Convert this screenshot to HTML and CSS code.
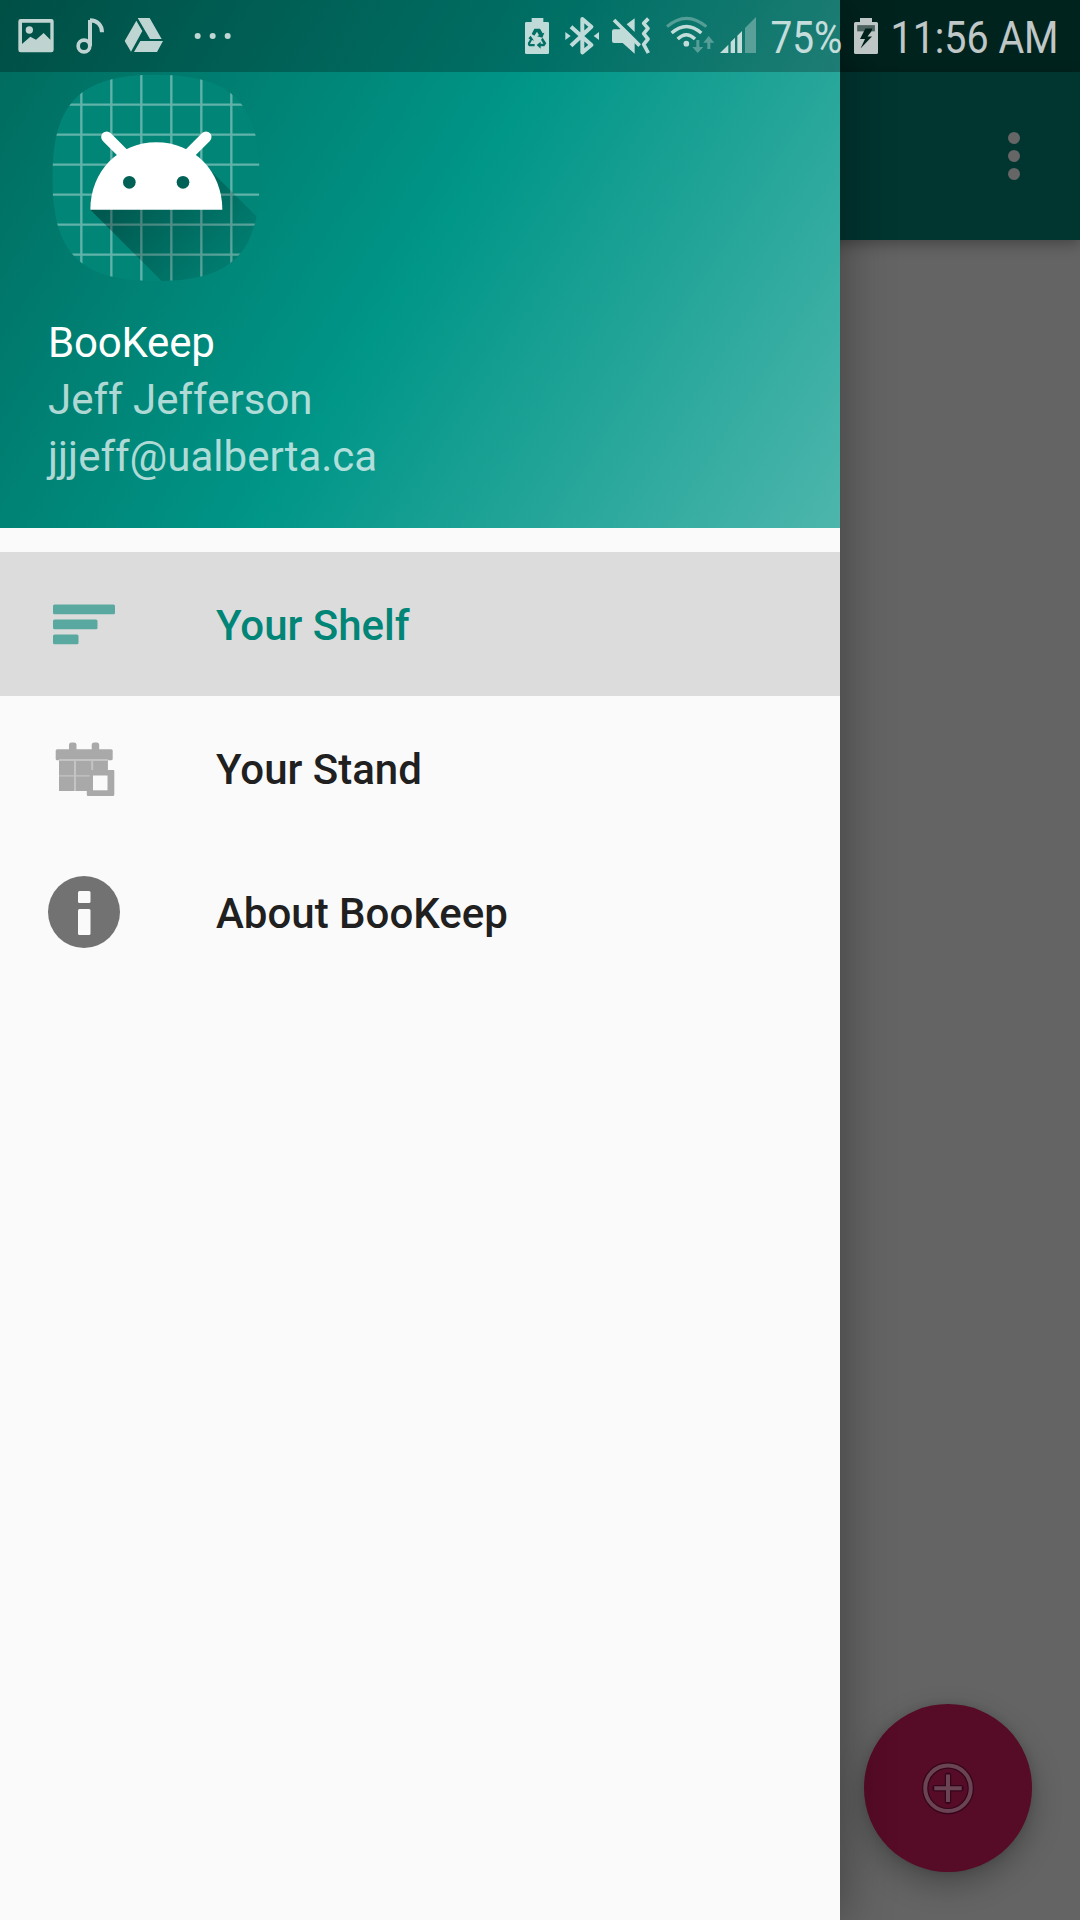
FILE: index.html
```html
<!DOCTYPE html>
<html lang="en">
<head>
<meta charset="utf-8">
<title>BooKeep</title>
<link rel="stylesheet" href="styles.css">
</head>
<body>
<div class="screen">
  <main class="page">
    <div class="page-status"></div>
    <header class="app-bar">
      <svg class="overflow" width="12" height="48" viewBox="0 0 12 48"><circle cx="6" cy="6" r="6"/><circle cx="6" cy="24" r="6"/><circle cx="6" cy="42" r="6"/></svg>
    </header>
    <button class="fab" aria-label="Add">
      <svg width="54" height="54" viewBox="0 0 54 54" fill="none" stroke-linecap="round">
        <g stroke="#34051a" stroke-width="6.4"><circle cx="27" cy="27.300" r="22.8"/><path d="M14.5 27.300h25M27 14.8v25"/></g>
        <g stroke="#6b4453" stroke-width="4" stroke-linecap="butt"><circle cx="27" cy="27.300" r="22.8"/><path d="M13.3 27.300h27.4M27 13.600v27.4"/></g>
      </svg>
    </button>
  </main>

  <aside class="drawer">
    <header class="drawer-header">
      <svg class="logo" width="208" height="208" viewBox="65 43 624 624">
        <defs>
          <clipPath id="mask"><path d="M377 45C604 45 688 128 688 355S604 664 377 664 66 582 66 355 150 45 377 45Z"/></clipPath>
          <linearGradient id="cast" gradientUnits="userSpaceOnUse" x1="270" y1="350" x2="550" y2="630"><stop offset="0" stop-opacity=".36"/><stop offset="1" stop-opacity=".08"/></linearGradient>
        </defs>
        <g clip-path="url(#mask)">
          <path fill="#008577" d="M60 40h640v640H60z"/>
          <path stroke="#fff" stroke-opacity=".38" stroke-width="7" d="M153 40v630M243 40v630M333 40v630M423 40v630M513 40v630M603 40v630M60 135h640M60 225h640M60 315h640M60 405h640M60 495h640M60 585h640"/>
          <path fill="url(#cast)" d="M180 450 430 700H700V492L536 328 300 300Z"/>
        </g>
        <path fill="#fff" d="M180 450C180 335 265 248 378 248S576 335 576 450Z"/>
        <path stroke="#fff" stroke-width="33" stroke-linecap="round" d="m229 232 62 62M527 232l-62 62"/>
        <circle cx="297" cy="368" r="19" fill="#006156"/><circle cx="458" cy="368" r="19" fill="#006156"/>
      </svg>
      <div class="account">
        <div class="account-name">BooKeep</div>
        <div>Jeff Jefferson</div>
        <div>jjjeff@ualberta.ca</div>
      </div>
    </header>
    <nav class="menu">
      <a class="item selected">
        <svg width="72" height="72" viewBox="0 0 72 72" fill="#5aa9a0"><rect x="5" y="16.500" width="62" height="9.700" rx="1.5"/><rect x="5" y="31.500" width="44.5" height="9.700" rx="1.5"/><rect x="5" y="46.500" width="25.5" height="9.700" rx="1.5"/></svg>
        <span>Your Shelf</span>
      </a>
      <a class="item">
        <svg width="72" height="72" viewBox="0 0 72 72" fill="#a9a9a9">
          <rect x="21" y="10.500" width="7.5" height="12" rx="2.5"/><rect x="43.7" y="10.500" width="7.5" height="12" rx="2.5"/>
          <rect x="7.7" y="17.300" width="57" height="11" rx="1.5"/>
          <path fill="#c4c4c4" d="M11 27h49v16H44v16H11z"/>
          <path d="M11 29h15v14.300H11zM28 29h15.2v14.300H28zM45.2 29h14.5v14.300H45.2zM11 44.500h15V59H11zM28 44.500h15.2V59H28z"/>
          <path d="M38.8 58h3V38h23.5q1 0 1 1V62.500q0 1.500-1.500 1.500H40q-1.200 0-1.200-1.500z"/>
          <path fill="#fafafa" d="M45 43.500h14.500v14.800H45z"/>
        </svg>
        <span>Your Stand</span>
      </a>
      <a class="item">
        <svg width="72" height="72" viewBox="0 0 72 72"><circle cx="36" cy="36" r="36" fill="#727272"/><rect x="30" y="15" width="12.5" height="12" rx="1.500" fill="#fafafa"/><rect x="30" y="33" width="12.5" height="26" rx="1.500" fill="#fafafa"/></svg>
        <span>About BooKeep</span>
      </a>
    </nav>
  </aside>

  <div class="status-bar">
    <svg width="240" height="72" viewBox="0 0 720 216" fill="#fff">
      <path fill-rule="evenodd" d="M62 57h92q7 0 7 7v86q0 7-7 7H62q-7 0-7-7V64q0-7 7-7zM66 68v64l25-22 17 9 23-20 20 20V68z"/><circle cx="88" cy="90" r="11"/>
      <g fill="none" stroke="#fff"><circle cx="252" cy="138" r="17.500" stroke-width="11"/><path stroke-width="12" d="M270 138V60M270 61C292 61 306 76 306 97"/></g>
      <path d="M413 54h36l36 63h-35zM409 62l18 31-34 62-19-32zM421 123h68l-18 33h-69z"/>
      <circle cx="593" cy="108" r="9"/><circle cx="638" cy="108" r="9"/><circle cx="683" cy="108" r="9"/>
    </svg>
    <div class="status-right">
      <svg width="250" height="72" viewBox="0 0 750 216" fill="#fff">
        <path fill-rule="evenodd" d="M65 54h35v12h13q4 0 4 4v88q0 4-4 4H49q-4 0-4-4V70q0-4 4-4h16zM73 86h17l8 14 5-2-6 15-16-4 6-3-6-11-8 12-8-5zM62 107l10 15-6-2-6 12h14v7H57q-7-7 0-15l3-6-5-3zM98 113l11 17-6 9H92v7l-12-11 12-10v6h8l-7-12z"/>
        <path fill="none" stroke="#fff" stroke-width="12" stroke-linejoin="round" d="m183 80 61 55-27 22V57l27 23-61 57"/>
        <path d="M166 96l16 12-16 12zM267 96l-16 12 16 12z"/>
        <path d="M306 94q0-6 6-6h18l8-8 36 36v45l-36-32h-26q-6 0-6-6zM374 55v41l-24-23z"/>
        <path fill="none" stroke="#fff" stroke-width="11" d="m312 60 77 77"/>
        <path fill="none" stroke="#fff" stroke-width="11" stroke-linejoin="round" d="m415 56-14 14 13 15-13 16 13 16-13 16 14 26"/>
        <g fill="none" stroke="#fff" stroke-width="10"><path stroke-opacity=".4" stroke-width="9" d="M471 80Q529 30 589 80"/><path d="M485 99Q529 60 574 99M503 117Q529 92 555 117"/></g>
        <circle cx="529" cy="131" r="8.500"/>
        <path fill-opacity=".4" d="M559 120h9v21h12l-17 18-16-18h12zM592 147h9v-19h12l-17-20-16 20h12z"/>
        <path d="M630 159l25-25v25zM662 159v-33l13-13v46zM682 159v-52l14-14v66z"/><path fill-opacity=".4" d="M705 159V84l33-33v108z"/>
      </svg>
      <svg width="320" height="72" viewBox="0 0 320 72" fill="#fff">
        <text class="clock" x="10.500" y="53" textLength="72" lengthAdjust="spacingAndGlyphs">75%</text>
        <path fill-rule="evenodd" d="M100 18h12v4h4.500q1.500 0 1.500 1.500v29q0 1.500-1.500 1.500h-21q-1.500 0-1.500-1.500v-29q0-1.500 1.500-1.500h4.500zM97.300 25.300v6h6.700L100 39h5l-4.500 9.500L112 36.500h-4.500l4-5.200h3.300v-6z"/>
        <path fill-opacity=".4" d="M97.300 25.300h17.500v6h-3.300l.8-2.800h-7l-1.300 2.800h-6.700z"/>
        <text class="clock" x="130.500" y="53" textLength="168" lengthAdjust="spacingAndGlyphs">11:56 AM</text>
      </svg>
    </div>
  </div>
</div>
</body>
</html>
```
FILE: styles.css
```css
* { box-sizing: border-box; }
body { margin: 0; font-family: Roboto, "Liberation Sans", sans-serif; }
.screen { position: relative; width: 1080px; height: 1920px; overflow: hidden; }

.page { height: 100%; background: #646464; }
.page-status { height: 72px; background: #00231e; }
.app-bar {
  display: flex; align-items: center; justify-content: flex-end;
  height: 168px; padding: 0 60px 0 0;
  background: #003530; box-shadow: 0 4px 14px rgba(0, 0, 0, .32);
}
.overflow { fill: #666; }
.fab {
  position: absolute; right: 48px; bottom: 48px;
  display: flex; align-items: center; justify-content: center;
  width: 168px; height: 168px; padding: 0;
  border: 0; border-radius: 50%; background: #560b26;
  box-shadow: 0 12px 30px rgba(0, 0, 0, .28), 0 0 8px rgba(0, 0, 0, .12);
}

.drawer {
  position: absolute; top: 0; left: 0; width: 840px; height: 100%;
  background: #fafafa; box-shadow: 0 0 48px rgba(0, 0, 0, .38);
}
.drawer-header {
  display: flex; flex-direction: column; align-items: flex-start;
  height: 528px; padding: 74px 48px 0;
  background: linear-gradient(122.15deg, #00695c, #009688 50%, #4db6ac);
}
.logo { margin-left: 4px; }
.account {
  margin-top: 32px; font-size: 42px; line-height: 57px;
  color: rgba(255, 255, 255, .7);
}
.account-name { color: #fff; letter-spacing: -.2px; }
.menu { display: flex; flex-direction: column; padding-top: 24px; }
.item {
  display: flex; align-items: center; gap: 96px;
  height: 144px; padding: 0 48px;
  font-size: 42px; font-weight: 500; line-height: 57px; color: #202020;
}
.item span { padding-top: 2px; }
.selected { background: #dcdcdc; color: #008577; }

.status-bar {
  position: absolute; top: 0; left: 0;
  display: flex; justify-content: space-between;
  width: 100%; height: 72px;
  background: linear-gradient(90deg, rgba(0, 0, 0, .25) 840px, transparent 840px);
}
.status-bar svg { opacity: .75; }
.status-right { display: flex; }
.clock { font-size: 45px; }
```
